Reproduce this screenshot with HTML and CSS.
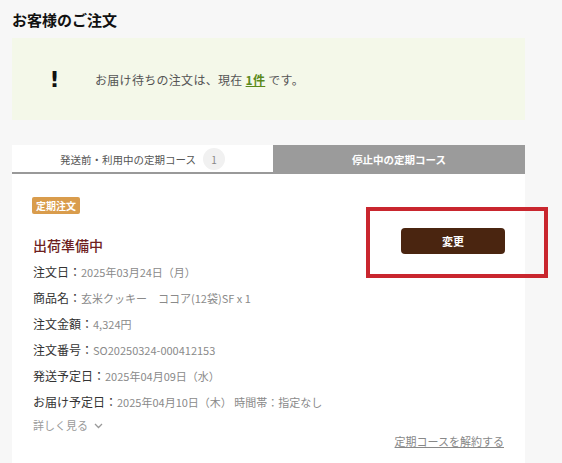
FILE: index.html
```html
<!DOCTYPE html>
<html lang="ja">
<head>
<meta charset="utf-8">
<link rel="stylesheet" href="styles.css">
</head>
<body>
<div class="page">
  <h1 class="title">お客様のご注文</h1>
  <div class="notice">
    <span class="notice-mark">!</span>
    <p class="notice-text">お届け待ちの注文は、現在 <a class="count" href="#">1件</a> です。</p>
  </div>
  <div class="tabs">
    <div class="tab tab-active"><span>発送前・利用中の定期コース</span><span class="badge">1</span></div>
    <div class="tab tab-off">停止中の定期コース</div>
  </div>
  <div class="card">
    <div class="card-head">
      <div class="head-left">
        <span class="tag">定期注文</span>
        <h2 class="status">出荷準備中</h2>
      </div>
      <button class="btn">変更</button>
    </div>
    <ul class="rows">
      <li><span class="lbl">注文日：</span><span class="val">2025年03月24日（月）</span></li>
      <li><span class="lbl">商品名：</span><span class="val">玄米クッキー　ココア(12袋)SF x 1</span></li>
      <li><span class="lbl">注文金額：</span><span class="val">4,324円</span></li>
      <li><span class="lbl">注文番号：</span><span class="val">SO20250324-000412153</span></li>
      <li><span class="lbl">発送予定日：</span><span class="val">2025年04月09日（水）</span></li>
      <li><span class="lbl">お届け予定日：</span><span class="val">2025年04月10日（木） 時間帯：指定なし</span></li>
    </ul>
    <div class="more">詳しく見る <svg class="chev" width="9" height="6" viewBox="0 0 9 6"><path d="M1 1l3.5 3.5L8 1" fill="none" stroke="#999" stroke-width="1.3"/></svg></div>
    <div class="cancel-row"><a class="cancel" href="#">定期コースを解約する</a></div>
  </div>
</div>
<div class="highlight"></div>
</body>
</html>
```

FILE: styles.css
```css
* { box-sizing: border-box; }
html, body { margin: 0; padding: 0; }
body {
  background: #f7f7f7;
  font-family: "Noto Sans CJK JP", "Noto Sans", sans-serif;
  color: #333;
  height: 463px;
  overflow: hidden;
  position: relative;
}
.page {
  width: 513px;
  margin-left: 12px;
  padding-top: 10px;
}
.title {
  margin: 0;
  font-size: 15px;
  line-height: 20px;
  font-weight: 700;
  color: #111;
}
.notice {
  margin-top: 8px;
  height: 82px;
  background: #f4f8e9;
  display: flex;
  align-items: center;
}
.notice-mark {
  width: 83px;
  text-align: center;
  font-family: "DejaVu Sans", sans-serif;
  font-weight: 700;
  font-size: 22px;
  color: #111;
  padding-left: 2px;
}
.notice-text {
  margin: 0;
  font-size: 12px;
  letter-spacing: 0.3px;
  color: #555;
}
.count {
  color: #5b8a1c;
  font-weight: 700;
  text-decoration: underline;
}
.tabs {
  margin-top: 25px;
  display: flex;
  height: 29px;
}
.tab {
  display: flex;
  align-items: center;
  justify-content: center;
  font-size: 10.5px;
}
.tab-active {
  width: 261px;
  background: #fff;
  color: #555;
  border-bottom: 2px solid #999;
  gap: 7px;
  padding-top: 1px;
}
.badge {
  width: 22px;
  height: 22px;
  border-radius: 50%;
  background: #f1f1f1;
  color: #888;
  font-size: 10px;
  display: flex;
  align-items: center;
  justify-content: center;
}
.tab-off {
  flex: 1;
  background: #9b9b9b;
  color: #fff;
  font-weight: 700;
}
.card {
  background: #fff;
  padding: 23px 20px 20px 20px;
  height: 300px;
}
.card-head {
  display: flex;
  justify-content: space-between;
  align-items: flex-end;
}
.head-left {
  display: flex;
  flex-direction: column;
  align-items: flex-start;
}
.tag {
  display: inline-block;
  background: #d99c4c;
  color: #fff;
  font-size: 10px;
  font-weight: 700;
  line-height: 17px;
  padding: 0 4px;
  border-radius: 2px;
}
.status {
  margin: 21px 0 0 1px;
  font-size: 14px;
  line-height: 20px;
  font-weight: 500;
  color: #6e1f1f;
}
.btn {
  width: 104px;
  height: 26px;
  margin-bottom: 1px;
  background: #4a2510;
  color: #fff;
  border: 0;
  border-radius: 4px;
  font-family: inherit;
  font-size: 11px;
  font-weight: 700;
}
.rows {
  list-style: none;
  margin: 2px 0 0 0;
  padding: 0 0 0 1px;
}
.rows li {
  line-height: 26px;
  height: 26px;
  white-space: nowrap;
}
.lbl {
  font-size: 12px;
  color: #333;
}
.val {
  font-size: 11px;
  color: #8a8a8a;
}
.more {
  margin-top: 4px;
  line-height: 16px;
  font-size: 11px;
  color: #9a9a9a;
  display: flex;
  align-items: center;
  gap: 6px;
  padding-left: 1px;
}
.chev { margin-top: 1px; }
.cancel-row {
  display: flex;
  justify-content: flex-end;
  line-height: 16px;
  padding-right: 1px;
}
.cancel {
  font-size: 11px;
  color: #888;
  text-decoration: underline;
}
.highlight {
  position: absolute;
  left: 366px;
  top: 207px;
  width: 182px;
  height: 71px;
  border: 4px solid #c9262e;
}
```
